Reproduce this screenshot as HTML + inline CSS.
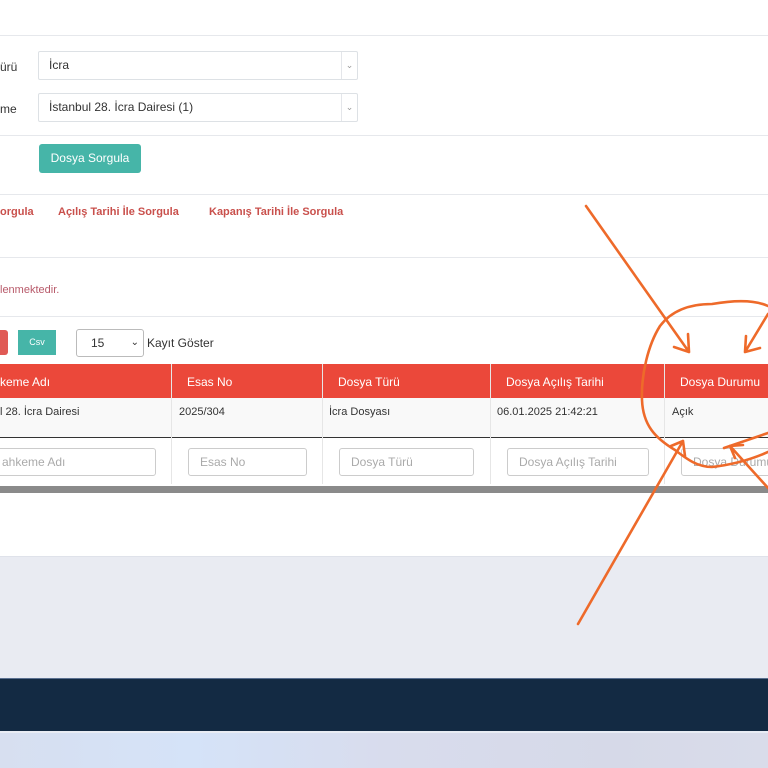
<!DOCTYPE html>
<html><head><meta charset="utf-8"><style>
*{margin:0;padding:0;box-sizing:border-box}
body{width:768px;height:768px;position:relative;overflow:hidden;background:#fff;font-family:"Liberation Sans",Arial,sans-serif;font-size:12px;color:#333}
.a{position:absolute}
.hl{position:absolute;left:0;width:768px;height:1px;background:#e6e8ec}
.sel{position:absolute;border:1px solid #dde1e5;border-radius:2px;background:#fff;padding-left:10px;line-height:27px;font-size:12px;color:#333}
.sel .ar{position:absolute;right:0;top:0;width:16px;height:27px;border-left:1px solid #e4e6ea;color:#999;font-size:9px;text-align:center}
.lnk{position:absolute;top:206px;color:#c9504c;font-weight:bold;font-size:11px}
.th{position:absolute;top:365px;height:34px;line-height:34px;color:#fff;font-size:12px}
.td{position:absolute;top:406px;font-size:11px;color:#333}
.inp{position:absolute;top:448px;height:28px;border:1px solid #ccc;border-radius:3px;background:#fff;color:#aaa;font-size:12px;line-height:26px;padding-left:11px;white-space:nowrap;overflow:hidden}
.vl{position:absolute;width:1px;background:#ddd}
</style></head><body>
<div class="hl" style="top:35px"></div>
<div class="a" style="left:0;top:60px;font-size:12px">ürü</div>
<div class="sel" style="left:38px;top:51px;width:320px;height:29px">İcra<div class="ar">&#8964;</div></div>
<div class="a" style="left:0;top:102px;font-size:12px">me</div>
<div class="sel" style="left:38px;top:93px;width:320px;height:29px">İstanbul 28. İcra Dairesi (1)<div class="ar">&#8964;</div></div>
<div class="hl" style="top:135px"></div>
<div class="a" style="left:39px;top:144px;width:102px;height:29px;background:#46b5a8;border-radius:3px;color:#fff;font-size:12px;line-height:29px;text-align:center">Dosya Sorgula</div>
<div class="hl" style="top:194px"></div>
<div class="lnk" style="left:0">orgula</div>
<div class="lnk" style="left:58px">Açılış Tarihi İle Sorgula</div>
<div class="lnk" style="left:209px">Kapanış Tarihi İle Sorgula</div>
<div class="hl" style="top:257px"></div>
<div class="a" style="left:0;top:284px;font-size:11px;color:#b85a6a">lenmektedir.</div>
<div class="hl" style="top:316px"></div>
<div class="a" style="left:0;top:330px;width:8px;height:25px;background:#e05a55;border-radius:0 3px 3px 0"></div>
<div class="a" style="left:18px;top:330px;width:38px;height:25px;background:#46b5a8;color:#fff;font-size:9px;line-height:25px;text-align:center">Csv</div>
<div class="a" style="left:76px;top:329px;width:68px;height:28px;border:1px solid #bbb;border-radius:3px;padding-left:14px;line-height:26px;font-size:12px">15<span style="position:absolute;right:4px;top:0;font-size:10px">&#8964;</span></div>
<div class="a" style="left:147px;top:336px;font-size:12px">Kayıt Göster</div>
<div class="a" style="left:0;top:364px;width:768px;height:34px;background:#eb483a"></div>
<div class="a" style="left:0;top:398px;width:768px;height:39px;background:#f9f9f9"></div>
<div class="a" style="left:0;top:437px;width:768px;height:1px;background:#333"></div>
<div class="vl" style="left:171px;top:364px;height:120px;background:#e6e6e6"></div>
<div class="vl" style="left:322px;top:364px;height:120px;background:#e6e6e6"></div>
<div class="vl" style="left:490px;top:364px;height:120px;background:#e6e6e6"></div>
<div class="vl" style="left:664px;top:364px;height:120px;background:#e6e6e6"></div>
<div class="th" style="left:0">keme Adı</div>
<div class="th" style="left:187px">Esas No</div>
<div class="th" style="left:338px">Dosya Türü</div>
<div class="th" style="left:506px">Dosya Açılış Tarihi</div>
<div class="th" style="left:680px">Dosya Durumu</div>
<div class="td" style="left:0">l 28. İcra Dairesi</div>
<div class="td" style="left:179px">2025/304</div>
<div class="td" style="left:329px">İcra Dosyası</div>
<div class="td" style="left:497px">06.01.2025 21:42:21</div>
<div class="td" style="left:672px">Açık</div>
<div class="inp" style="left:-10px;width:166px">ahkeme Adı</div>
<div class="inp" style="left:188px;width:119px">Esas No</div>
<div class="inp" style="left:339px;width:135px">Dosya Türü</div>
<div class="inp" style="left:507px;width:142px">Dosya Açılış Tarihi</div>
<div class="inp" style="left:681px;width:100px">Dosya Durumu</div>
<div class="a" style="left:0;top:486px;width:768px;height:7px;background:#8a8a8a"></div>
<div class="a" style="left:0;top:556px;width:768px;height:122px;background:#e9ebf2;border-top:1px solid #dfe2ea"></div>
<div class="a" style="left:0;top:678px;width:768px;height:53px;background:#132a43;border-top:1px solid #5a7090"></div>
<div class="a" style="left:0;top:731px;width:768px;height:37px;background:linear-gradient(90deg,#d7dff0,#d5e3f8 25%,#d8dced 50%,#d6d9e8 80%,#d9dcea);border-top:2px solid #e8ecf4"></div>
<svg class="a" style="left:0;top:0" width="768" height="768" fill="none" stroke="#ee6a2a" stroke-width="2.6" stroke-linecap="round" stroke-linejoin="round">
<path d="M586 206 L689 352 M689 352 L688 334 M689 352 L674 347"/>
<path d="M768 314 L745 352 M745 352 L746 336 M745 352 L760 348"/>
<path d="M768 306 C755 300 735 300 712 304 C690 304 672 310 660 326 C648 345 641 375 642 400 C643 425 655 438 675 450 C688 460 698 467 712 467 C730 465 750 460 768 452"/>
<path d="M578 624 L683 441 M683 441 L671 446 M683 441 L685 456"/>
<path d="M768 488 L730 446 M730 446 L743 445 M730 446 L735 458"/>
<path d="M724 448 L768 433"/>
</svg>
</body></html>
